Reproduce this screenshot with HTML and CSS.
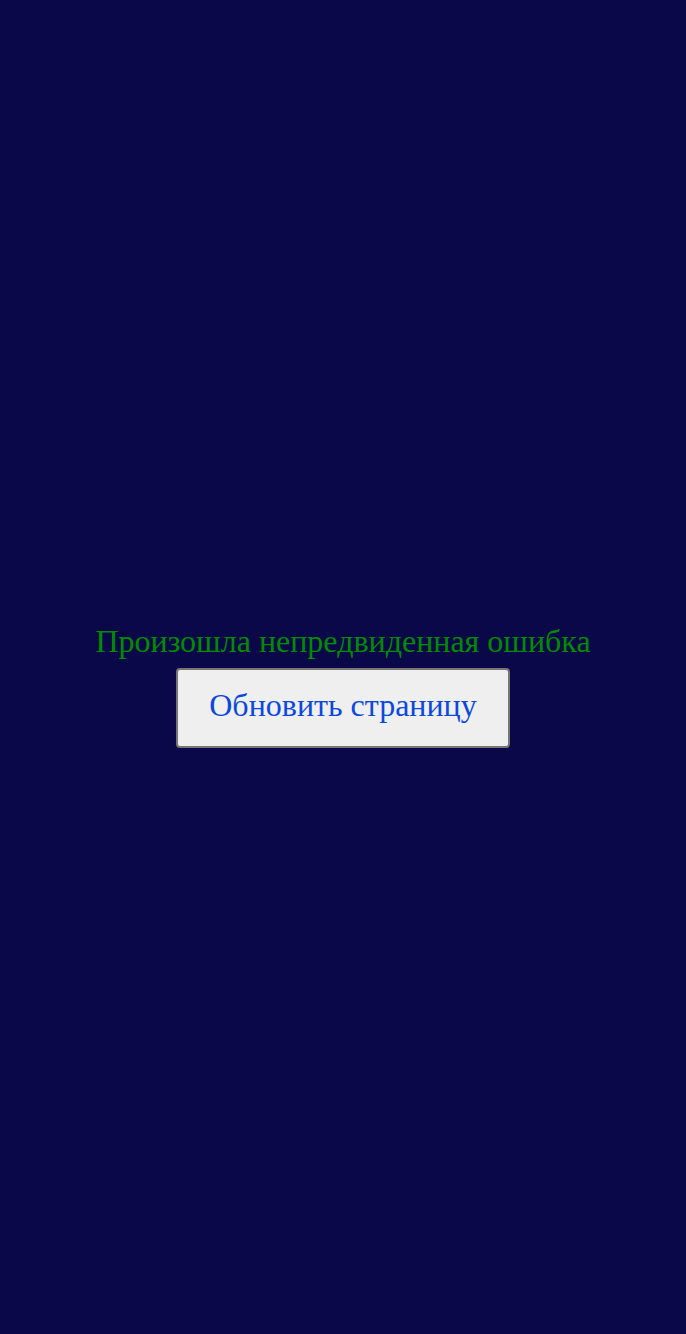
FILE: index.html
```html
<!DOCTYPE html>
<html lang="ru">
<head>
<meta charset="utf-8">
<link rel="stylesheet" href="styles.css">
</head>
<body>
<div class="wrap">
  <div class="msg">Произошла непредвиденная ошибка</div>
  <button class="btn">Обновить страницу</button>
</div>
</body>
</html>
```
FILE: styles.css
```css
html, body { margin: 0; padding: 0; height: 100%; }
body { background: #0a0849; font-family: "Liberation Serif", serif; }
.wrap {
  box-sizing: border-box;
  height: 100%;
  padding-top: 37px;
  display: flex;
  flex-direction: column;
  align-items: center;
  justify-content: center;
}
.msg { color: #008c00; font-size: 32px; line-height: 37px; }
.btn {
  font-family: "Liberation Serif", serif;
  font-size: 32px;
  line-height: 37px;
  color: #0a48e0;
  background: #efefef;
  border: 2px solid #767676;
  border-radius: 4px;
  padding: 17px 31px 22px;
  margin-top: 8px;
}
```
